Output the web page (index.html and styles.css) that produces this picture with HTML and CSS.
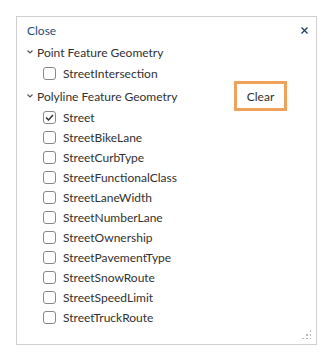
FILE: index.html
```html
<!DOCTYPE html>
<html lang="en">

<head>
    <meta charset="UTF-8">
    <title>Feature Layers</title>
    <link rel="stylesheet" href="styles.css">
</head>

<body>
    <div class="panel">
        <div class="panel-head">
            <a class="close-link" href="#">Close</a>
            <span class="close-x">
                <svg width="7" height="7" viewBox="0 0 7 7"><path d="M0.5 0.5 L6.5 6.5 M6.5 0.5 L0.5 6.5" stroke="#1f3f66" stroke-width="1.3"/></svg>
            </span>
        </div>

        <div class="group">
            <div class="group-head">
                <svg class="chevron" width="6" height="4" viewBox="0 0 6 4"><path d="M0.5 0.5 L3 3 L5.5 0.5" fill="none" stroke="#555" stroke-width="1.2"/></svg>
                <span>Point Feature Geometry</span>
            </div>
            <div class="items">
                <label class="item"><span class="box"></span>StreetIntersection</label>
            </div>
        </div>

        <div class="group">
            <div class="group-head">
                <svg class="chevron" width="6" height="4" viewBox="0 0 6 4"><path d="M0.5 0.5 L3 3 L5.5 0.5" fill="none" stroke="#555" stroke-width="1.2"/></svg>
                <span>Polyline Feature Geometry</span>
                <button type="button" class="clear-btn">Clear</button>
            </div>
            <div class="items">
                <label class="item"><span class="box checked"><svg width="11" height="11" viewBox="0 0 11 11"><path d="M2 5.5 L4.5 8 L9 3" fill="none" stroke="#333" stroke-width="1.5"/></svg></span>Street</label>
                <label class="item"><span class="box"></span>StreetBikeLane</label>
                <label class="item"><span class="box"></span>StreetCurbType</label>
                <label class="item"><span class="box"></span>StreetFunctionalClass</label>
                <label class="item"><span class="box"></span>StreetLaneWidth</label>
                <label class="item"><span class="box"></span>StreetNumberLane</label>
                <label class="item"><span class="box"></span>StreetOwnership</label>
                <label class="item"><span class="box"></span>StreetPavementType</label>
                <label class="item"><span class="box"></span>StreetSnowRoute</label>
                <label class="item"><span class="box"></span>StreetSpeedLimit</label>
                <label class="item"><span class="box"></span>StreetTruckRoute</label>
            </div>
        </div>

        <span class="grip"></span>
    </div>
</body>

</html>
```

FILE: styles.css
```css
body {
    background-color: #ffffff;
    margin: 0;
    font-family: 'Lato', sans-serif;
    font-size: 12px;
    color: #323130;
}

.panel {
    position: relative;
    box-sizing: border-box;
    width: 301px;
    height: 329px;
    margin: 16px;
    padding: 3px 8px 0 10px;
    border: 1px solid #cfcfcf;
}

.panel-head {
    display: flex;
    align-items: center;
    justify-content: space-between;
    height: 20px;
    margin-bottom: 2px;
}

.close-link {
    color: #1f4e79;
    text-decoration: none;
}

.close-x {
    display: flex;
}

.group + .group {
    margin-top: 3px;
}

.group-head {
    display: flex;
    align-items: center;
    height: 20px;
}

.chevron {
    margin-right: 4px;
}

.clear-btn {
    margin: -5px 21px -5px auto;
    width: 53px;
    height: 30px;
    padding: 0;
    background-color: #ffffff;
    border: 3px solid #f0a25c;
    font-family: inherit;
    font-size: 12px;
    color: #323130;
}

.items {
    padding-top: 1px;
    padding-left: 16px;
}

.item {
    display: flex;
    align-items: center;
    height: 20px;
}

.box {
    display: flex;
    align-items: center;
    justify-content: center;
    box-sizing: border-box;
    width: 13px;
    height: 13px;
    margin-right: 7px;
    border: 1px solid #8a8886;
    border-radius: 3px;
}

.grip {
    position: absolute;
    right: 5px;
    bottom: 5px;
    width: 10px;
    height: 10px;
    background:
        radial-gradient(circle, #b8b8b8 1px, transparent 1.2px) 0 0 / 4px 4px;
    clip-path: polygon(100% 0, 100% 100%, 0 100%);
}
```
